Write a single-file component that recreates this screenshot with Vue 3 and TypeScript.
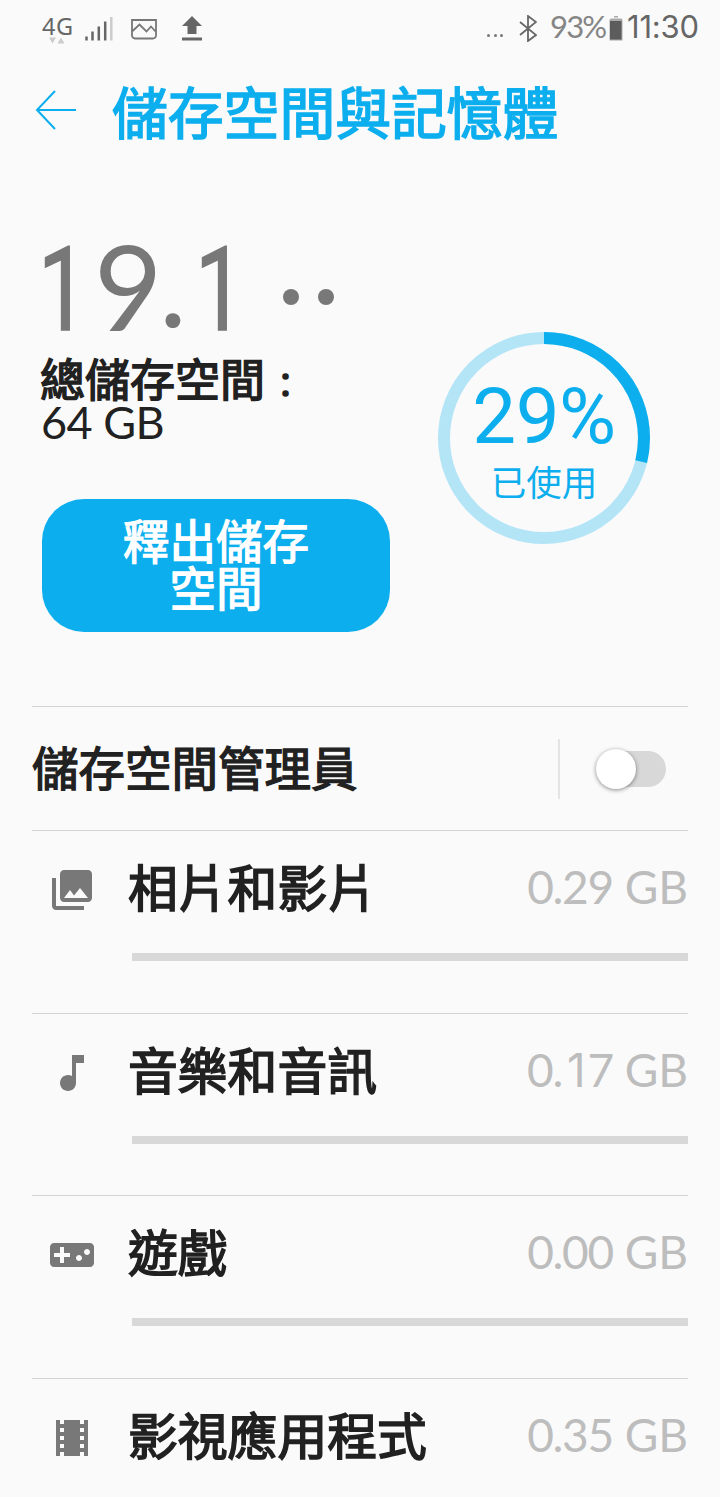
<script setup lang="ts">
interface Category {
  id: string
  name: string
  amount: string
  icon: string
}

const usedPercent = 28.8

const categories: Category[] = [
  {
    id: 'photos',
    name: '相片和影片',
    amount: '0.29',
    icon: 'M22 16V4c0-1.1-.9-2-2-2H8c-1.1 0-2 .9-2 2v12c0 1.1.9 2 2 2h12c1.1 0 2-.9 2-2zm-11-4l2.03 2.71L16 11l4 5H8l3-4zM2 6v14c0 1.1.9 2 2 2h14v-2H4V6H2z',
  },
  {
    id: 'music',
    name: '音樂和音訊',
    amount: '0.17',
    icon: 'M12 3v10.55c-.59-.34-1.27-.55-2-.55-2.21 0-4 1.79-4 4s1.79 4 4 4 4-1.79 4-4V7h4V3h-6z',
  },
  {
    id: 'games',
    name: '遊戲',
    amount: '0.00',
    icon: 'M21 6H3c-1.1 0-2 .9-2 2v8c0 1.1.9 2 2 2h18c1.1 0 2-.9 2-2V8c0-1.1-.9-2-2-2zm-10 7H8v3H6v-3H3v-2h3V8h2v3h3v2zm4.5 2c-.83 0-1.5-.67-1.5-1.5s.67-1.5 1.5-1.5 1.5.67 1.5 1.5-.67 1.5-1.5 1.5zm4-3c-.83 0-1.5-.67-1.5-1.5S18.67 9 19.5 9s1.5.67 1.5 1.5-.67 1.5-1.5 1.5z',
  },
  {
    id: 'movies',
    name: '影視應用程式',
    amount: '0.35',
    icon: 'M18 3v2h-2V3H8v2H6V3H4v18h2v-2h2v2h8v-2h2v2h2V3h-2zM8 17H6v-2h2v2zm0-4H6v-2h2v2zm0-4H6V7h2v2zm10 8h-2v-2h2v2zm0-4h-2v-2h2v2zm0-4h-2V7h2v2z',
  },
]
</script>

<template>
  <main class="screen">
    <div class="status">
      <div class="network">
        <span class="net-label">4G</span>
        <svg class="traffic" viewBox="0 0 16 7"><path d="M0 .5h7L3.500 6.500zM8.500 6.500h7L12 .5z" /></svg>
      </div>
      <svg class="signal" viewBox="0 0 28 26">
        <path class="on" d="M1.500 20.500v4M7.500 15.500v9M13.800 10.500v14M20.200 5.500v19" />
        <path class="off" d="M26.300 1v23.500" />
      </svg>
      <svg class="picture" viewBox="0 0 26 21">
        <path d="M1 1h24v15.500a3 3 0 0 1-3 3H4a3 3 0 0 1-3-3zM1 12.500l7.500-7 7 7 4.500-5 5 5.500" />
      </svg>
      <svg class="upload" viewBox="0 0 20 25"><path d="M10 0l10 10h-5.500v8h-9v-8H0zM0 21.500h20v3H0z" /></svg>
      <span class="dots"><i /><i /><i /></span>
      <svg class="bluetooth" viewBox="0 0 18 27"><path d="M1 7l16 13-8 6V1l8 6L1 20" /></svg>
      <span class="battery-text">93%</span>
      <svg class="battery" viewBox="0 0 14 25">
        <path class="shell" d="M5 0h4v1.500H5zM.5 4Q.5 2.500 2 2.500h10q1.500 0 1.500 1.500v20.500H.5z" />
        <path class="fill" d="M1 5h11.500v18.500H1z" />
      </svg>
      <span class="clock">11:30</span>
    </div>

    <header class="header">
      <svg class="back" viewBox="0 0 42 42"><path d="M20 2L2 21l18 19M2 21h39" /></svg>
      <h1 class="title">儲存空間與記憶體</h1>
    </header>

    <section class="summary">
      <div class="amounts">
        <div class="used"><span class="n1">1</span><span class="n9">9</span><span class="np">.</span><span class="n1">1</span><span class="unit"><i /><i /></span></div>
        <div class="total">總儲存空間<span class="colon">：</span></div>
        <div class="capacity">64 GB</div>
        <button class="free">釋出儲存<br />空間</button>
      </div>
      <div class="gauge">
        <svg class="ring" viewBox="0 0 212 212">
          <circle class="track" cx="106" cy="106" r="100" />
          <circle class="value" cx="106" cy="106" r="100" pathLength="100" :stroke-dasharray="`${usedPercent} 100`" transform="rotate(-90 106 106)" />
        </svg>
        <div class="gauge-text">
          <div class="percent">{{ Math.round(usedPercent) }}%</div>
          <div class="caption">已使用</div>
        </div>
      </div>
    </section>

    <section class="manager">
      <span class="manager-label">儲存空間管理員</span>
      <span class="divider" />
      <span class="switch"><span class="thumb" /></span>
    </section>

    <section v-for="item in categories" :key="item.id" class="row">
      <div class="line">
        <svg class="icon" viewBox="0 0 24 24"><path :d="item.icon" /></svg>
        <span class="name">{{ item.name }}</span>
        <span class="size"><span class="amount"><span v-for="(ch, i) in item.amount" :key="i" :class="{ one: ch === '1' }">{{ ch }}</span></span> GB</span>
      </div>
      <div class="bar" />
    </section>
  </main>
</template>

<style>
html,
body {
  background: #fafafa;
  overflow: hidden;
}
</style>

<style scoped>
.screen {
  width: 720px;
  height: 1497px;
  overflow: hidden;
  box-sizing: border-box;
  background: #fafafa;
  color: #212121;
  font-family: "Noto Sans CJK TC", sans-serif;
}
svg {
  display: block;
  flex: none;
}
.status {
  height: 56px;
  display: flex;
  align-items: flex-start;
  color: #666;
  white-space: nowrap;
}
.network {
  width: 30px;
  margin: 14px 0 0 42px;
}
.net-label {
  display: block;
  font: 23.5px/25px "Noto Sans", sans-serif;
  letter-spacing: 0.5px;
}
.traffic {
  width: 16px;
  height: 7px;
  margin: -2px 0 0 7px;
  fill: #ccc;
}
.signal {
  width: 28px;
  height: 26px;
  margin: 16px 0 0 13px;
  fill: none;
  stroke-width: 2.5;
}
.on { stroke: #666; }
.off { stroke: #ccc; }
.picture {
  width: 26px;
  height: 21px;
  margin: 19px 0 0 18px;
  fill: none;
  stroke: #777;
  stroke-width: 1.8;
}
.upload {
  width: 20px;
  height: 25px;
  margin: 16px 0 0 25px;
  fill: #666;
}
.dots {
  display: flex;
  gap: 3.5px;
  margin: 34px 0 0 285px;
}
.dots i {
  width: 3px;
  height: 3px;
  border-radius: 50%;
  background: #777;
}
.bluetooth {
  width: 18px;
  height: 27px;
  margin: 15px 0 0 16px;
  fill: none;
  stroke: #666;
  stroke-width: 1.8;
}
.battery-text {
  width: 59px;
  margin: 8px 0 0 13px;
  font: 31px/36px Lato, sans-serif;
  letter-spacing: -1.8px;
  color: #858585;
}
.battery {
  width: 14px;
  height: 25px;
  margin: 16px 0 0 0;
}
.shell { fill: #aaa; }
.fill { fill: #5c5c5c; }
.clock {
  margin: 9px 0 0 4px;
  font: 31px/36px Inter, sans-serif;
  letter-spacing: -0.2px;
}
.header {
  height: 110px;
  display: flex;
  align-items: flex-start;
}
.back {
  width: 42px;
  height: 42px;
  margin: 33px 0 0 35px;
  fill: none;
  stroke: #0caeee;
  stroke-width: 2;
}
.title {
  margin: 19px 0 0 35px;
  font-size: 55.8px;
  line-height: 70px;
  font-weight: 400;
  color: #0caeee;
  -webkit-text-stroke: 1.6px #0caeee;
  white-space: nowrap;
}
.summary {
  height: 540px;
  display: flex;
  align-items: flex-start;
}
.amounts {
  width: 348px;
  padding-left: 42px;
}
.used {
  height: 84px;
  margin: 82px 0 0 -14px;
  display: flex;
  align-items: flex-start;
  font: 118px/84px Lato, sans-serif;
  color: #787878;
}
.n1 {
  width: 66px;
  font: 116px/84px Roboto, sans-serif;
  transform: scaleX(0.76);
  transform-origin: 42px 50%;
  -webkit-text-stroke: 1.5px #787878;
}
.n9 {
  width: 65px;
  margin-top: -4px;
}
.np {
  width: 26px;
  margin-top: -8px;
}
.unit {
  display: flex;
  gap: 19px;
  margin: 41px 0 0 32px;
}
.unit i {
  width: 16px;
  height: 16px;
  border-radius: 50%;
  background: #787878;
}
.total {
  margin: 23px 0 0 -2px;
  height: 46px;
  font-size: 45px;
  line-height: 46px;
  white-space: nowrap;
  -webkit-text-stroke: 1.5px #212121;
}
.colon {
  margin-left: 4px;
  font-size: 33px;
  line-height: 33px;
}
.capacity {
  margin: -2px 0 0 -1px;
  height: 46px;
  font: 45px/46px Lato, sans-serif;
  letter-spacing: -0.5px;
}
.free {
  display: block;
  width: 348px;
  height: 133px;
  margin: 54px 0 0;
  padding: 0 0 7px;
  border: 0;
  border-radius: 42px;
  background: #0caeee;
  color: #fff;
  font: 46.5px/47px "Noto Sans CJK TC", sans-serif;
  -webkit-text-stroke: 1.3px #fff;
}
.gauge {
  display: grid;
  width: 212px;
  margin: 166px 0 0 48px;
}
.gauge > * {
  grid-area: 1 / 1;
}
.ring {
  width: 212px;
  height: 212px;
  fill: none;
  stroke-width: 12;
}
.track { stroke: #b3e5f7; }
.value { stroke: #0caeee; }
.gauge-text {
  padding-top: 43px;
  text-align: center;
  color: #0caeee;
}
.percent {
  font: 78px/84px Roboto, sans-serif;
  letter-spacing: -0.5px;
}
.caption {
  font-size: 35.5px;
  line-height: 44px;
}
.manager {
  height: 123px;
  margin: 0 32px;
  border-top: 1px solid #d4d4d4;
  display: flex;
  align-items: center;
}
.manager-label {
  flex: 1;
  padding-bottom: 5px;
  font-size: 46.5px;
  line-height: 60px;
  -webkit-text-stroke: 1.4px #212121;
}
.divider {
  width: 2px;
  height: 60px;
  background: #e4e4e4;
}
.switch {
  width: 70px;
  height: 36px;
  margin: 0 22px 0 36px;
  border-radius: 18px;
  background: linear-gradient(to right, transparent 20px, #d8d8d8 20px);
  display: flex;
  align-items: center;
}
.thumb {
  width: 40px;
  height: 40px;
  border-radius: 50%;
  background: #fff;
  box-shadow: 0 1px 4px rgba(0, 0, 0, 0.45);
}
.row {
  height: 181.7px;
  margin: 0 32px;
  border-top: 1px solid #d4d4d4;
}
.line {
  height: 122px;
  display: flex;
  align-items: flex-start;
}
.icon {
  width: 48px;
  height: 48px;
  margin: 35px 0 0 16px;
  fill: #787878;
}
.name {
  flex: 1;
  margin: 24px 0 0 32px;
  font-size: 49.8px;
  line-height: 60px;
  white-space: nowrap;
  -webkit-text-stroke: 1.6px #212121;
}
.size {
  margin-top: 26px;
  font: 46px/60px Lato, sans-serif;
  color: #bdbdbd;
  white-space: pre;
}
.amount {
  letter-spacing: -1.3px;
}
.one {
  padding: 0 3px 0 5px;
  font-family: Inter, sans-serif;
}
.bar {
  height: 8px;
  margin-left: 100px;
  background: #d8d8d8;
}
</style>
